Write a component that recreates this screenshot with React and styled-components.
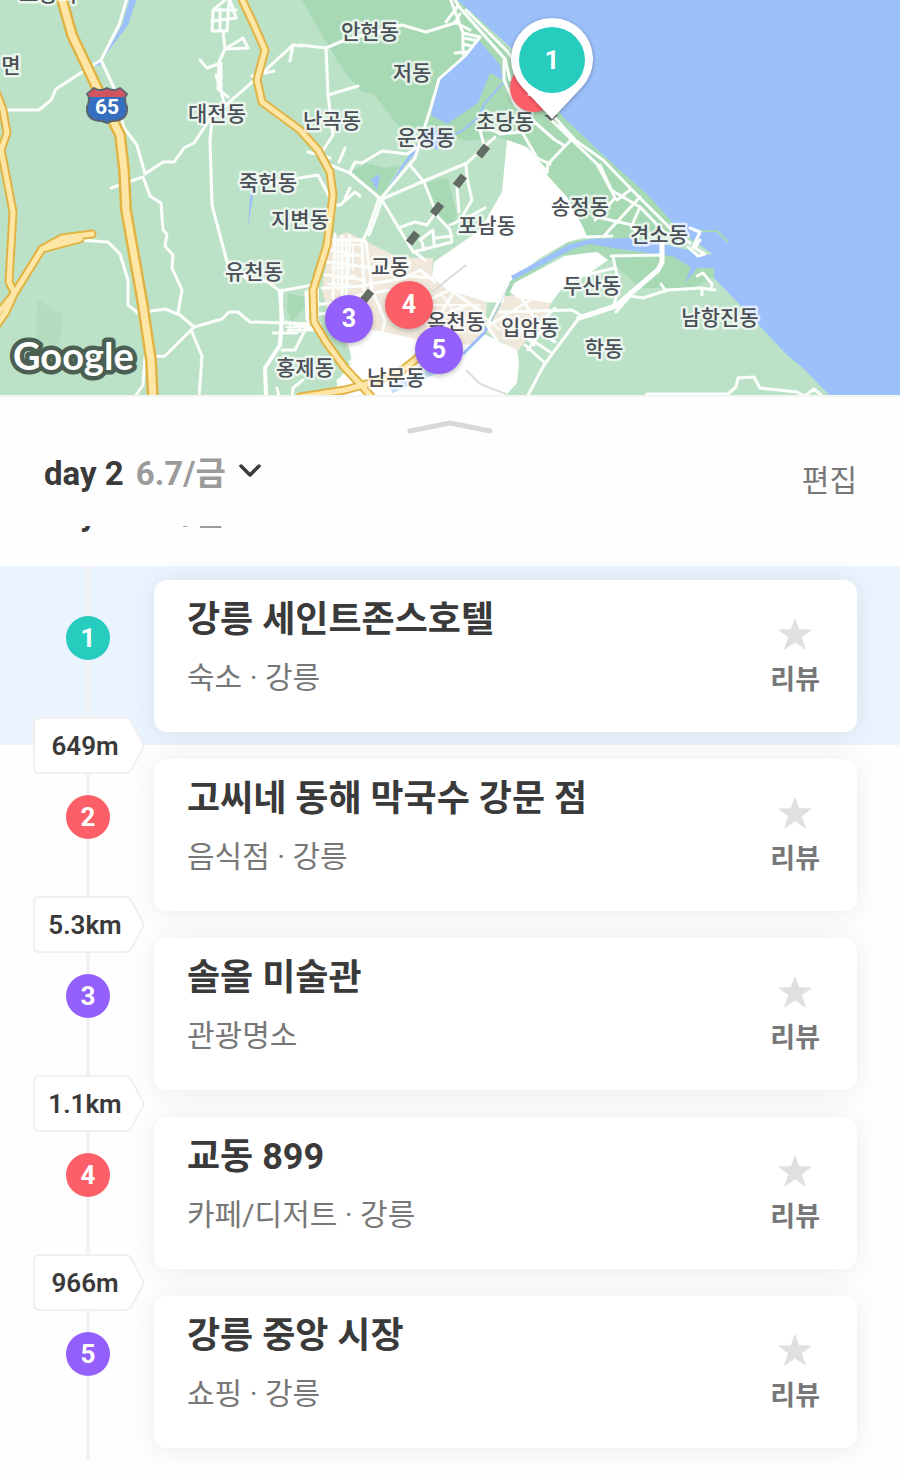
import React, { useState } from 'react'
import styled, { createGlobalStyle } from 'styled-components'

const TEAL = '#26cdbf'
const RED = '#fd5f68'
const PURPLE = '#9360fb'

const places = [
    { id: 1, color: TEAL, name: '강릉 세인트존스호텔', info: '숙소 · 강릉', distance: '649m' },
    { id: 2, color: RED, name: '고씨네 동해 막국수 강문 점', info: '음식점 · 강릉', distance: '5.3km' },
    { id: 3, color: PURPLE, name: '솔올 미술관', info: '관광명소', distance: '1.1km' },
    { id: 4, color: RED, name: '교동 899', info: '카페/디저트 · 강릉', distance: '966m' },
    { id: 5, color: PURPLE, name: '강릉 중앙 시장', info: '쇼핑 · 강릉' },
]

// positions are in map units (900 x 395)
const labels = [
    ['보광리', 48, -6], ['면', 11, 66], ['안현동', 370, 32], ['저동', 412, 73], ['난곡동', 332, 121],
    ['운정동', 426, 138], ['초당동', 505, 122], ['대전동', 217, 114], ['죽헌동', 268, 183],
    ['지변동', 300, 220], ['유천동', 254, 272], ['교동', 390, 267], ['포남동', 487, 226],
    ['송정동', 580, 207], ['견소동', 659, 235], ['두산동', 592, 286], ['옥천동', 456, 322],
    ['입암동', 530, 328], ['학동', 604, 349], ['남항진동', 720, 318], ['홍제동', 305, 368],
    ['남문동', 396, 378],
]

const pins = [
    { id: 2, color: RED, x: 534, y: 88 },
    { id: 4, color: RED, x: 409, y: 305 },
    { id: 3, color: PURPLE, x: 349, y: 319 },
    { id: 5, color: PURPLE, x: 439, y: 350 },
]

const highways = [
    'M61 -4 L72 35 L98 90 L120 135 L124 170 L126 210 L142 300 L151 360 L153 400',
    'M-3 94 L3 110 L7 133 L1 150 L6 175 L13 212 L9 282 L14 292',
    'M-6 318 L14 294 L42 249 L62 238 L92 234 M42 249 L80 239 M14 294 L6 312 L-4 326',
    'M240 -5 L254 25 L265 50 L257 80 L262 102 L300 130 L318 150 L330 172 L333 195 L327 245 L313 290 L314 322 L326 342 L345 368 L362 386 L374 400',
    'M300 397 L345 390 L370 383 L400 372 L420 356 L445 340',
]

const roads = [
    'M127 -2 L119 25 L101 60 L76 76 L56 89 L51 100 L39 110 L4 110',
    'M101 60 L115 90 L124 128 L137 145 L145 174 L163 162 L174 162 L184 148 L194 143 L210 119 L258 77 L293 45 L302 46',
    'M111 188 L143 177 L150 196 L161 203 L163 230 L167 234 L165 246 L173 255 L172 268 L182 290 L178 313',
    'M212 120 L210 140 L212 205 L227 262 L246 278',
    'M225 0 L213 10 L212 31 L227 31 L229 0 M213 10 L236 10 M212 21 L236 18 L230 0 M220 9 L220 31 M223 31 L225 49 L219 62 L218 89 L228 97 M225 49 L243 38 L248 48 L225 49 M200 60 L207 68 L221 63 L221 90',
    'M224 103 L222 95 L216 75 M293 45 L290 61 M252 76 L274 71',
    'M80 240 L108 242 L120 254 L128 280 L128 305 L138 313 L165 309 L180 315 L194 327 L222 319 L229 312 L238 312 L250 322 L320 324',
    'M194 327 L165 356 L145 357 L143 385 L134 398 M192 332 L202 356 L199 398',
    'M282 290 L280 345 L265 368 L266 397 M280 291 L318 284 M282 350 L295 350 L309 322 M273 333 L297 333',
    'M246 278 L268 282 L280 291',
    'M286 322 L318 330 M288 330 L315 330 M306 292 L307 320 M312 300 L314 314',
    'M277 388 L279 397 M292 397 L293 388 L303 380',
    'M300 45 L326 48 L345 40 L402 25 L426 32 L455 23 L460 14',
    'M326 48 L328 95 L333 135 L322 152 M328 95 L358 86',
    'M450 -2 L463 33 L463 54 M446 22 L458 6 M463 33 L480 37 L465 56 L439 79 L431 107 L415 158 L410 164 L382 197',
    'M455 0 L460 8 L505 59 L510 80 M455 22 L470 30 M463 38 L475 40 M463 44 L471 46 M455 53 L467 52',
    'M504 60 L504 80 L515 105 L555 140 L565 146 L573 138 L560 125',
    'M466 10 L508 52 L550 112 L575 140 L603 160 L633 191 L672 230 L690 243',
    'M548 117 L597 164 L611 190 L640 207 L665 233 M565 146 L548 164 L547 172 M550 164 L537 158 L522 132 L500 134 L488 128',
    'M547 172 L528 150 M480 130 L484 145 M495 137 L467 163 L424 181 L382 199 L376 217 L369 235',
    'M308 152 L330 158 M345 148 L339 162 M330 165 L350 173 L382 200 L412 250 L425 260',
    'M350 172 L355 162 L362 163 L382 151 L407 154 L416 148 M268 183 L318 175 L330 198',
    'M332 205 L340 205 L355 192 L360 196 M350 188 L345 198',
    'M410 165 L424 182 L438 217 L450 230 L452 242 L413 252 M466 165 L467 178 L457 188 L459 212 M467 178 L472 200 L463 215',
    'M379 198 L368 230 L362 242 L364 290 M398 228 L415 222 L427 225 L434 215 M420 240 L433 230 L434 244 M435 238 L452 236 M450 225 L472 215 L485 208 M424 250 L422 242',
    'M330 240 L365 240 M330 250 L363 256 M328 262 L388 270 M325 275 L365 280 M322 288 L365 286 M335 234 L333 298 M342 236 L342 295 M350 236 L346 298 M313 305 L340 302 M313 315 L335 312',
    'M366 242 L372 290 L385 320 L382 335 M365 285 L405 278 L420 270 L435 282 M355 296 L390 290 L425 300',
    'M410 262 L400 275 L432 278 M428 300 L450 290 L480 310 M437 320 L452 295 M450 312 L470 304',
    'M508 283 L487 325 L500 345 M490 325 L530 300 M500 312 L572 310 L582 316 M520 296 L545 335 L555 342 M534 345 L520 330 M525 345 L545 363 M532 340 L550 352 M528 350 L545 325',
    'M545 318 L555 308 M613 257 L619 285 L614 305 M585 275 L615 268 M611 256 L662 255',
    'M579 318 L570 330 L544 365 L527 397',
    'M603 237 L640 197 M601 218 L632 225 L638 235 M640 207 L632 225 M617 200 L630 190 M585 237 L612 236 M600 165 L615 198 L595 220',
    'M690 228 L700 232 L693 247 L705 254 L698 256 L688 247 M700 240 L695 248',
    'M616 312 L630 296 L643 298 L668 290 L700 288 L715 290 M661 284 L665 290 M702 288 L702 295 M697 276 L703 273 L712 284 L711 290',
    'M647 394 L728 394 L736 387 L738 378 L754 377 L760 388 L797 392 L806 397 M805 396 L814 389 L822 396',
    'M340 392 L338 380 M360 352 L350 362',
]

const tinyRoads = [
    'M286 327 H318 M290 324 V332 M300 324 V332 M308 290 V326 M318 285 V330',
    'M335 245 H360 M334 256 H356 M332 268 H350 M330 276 H356 M328 284 H350 M338 240 V290 M346 240 V290 M353 244 V270',
    'M440 292 L460 320 M450 288 L500 330 M430 305 L480 305',
]

const Markings = ({ d, color, width }) => (
    <path d={d} stroke={color} strokeWidth={width} fill="none" strokeLinejoin="round" strokeLinecap="round" />
)

const MapDrawing = () => (
    <Canvas viewBox="0 0 900 395" role="img" aria-label="강릉 지도">
        <rect width="900" height="395" fill="#bbe2c7" />

        {/* woods */}
        <g fill="#a8d9b5">
            <path d="M302 0 L320 32 L343 70 L362 92 L374 94 L400 128 L432 135 L470 141 L500 138 L522 145 L548 175 L586 235 L606 241 L640 245 L690 240 L720 256 L600 150 L520 60 L460 0Z" />
            <path d="M350 172 L366 163 L385 168 L400 165 L382 197Z" />
            <path d="M424 183 L448 178 L457 215 L452 228 L438 215Z" />
            <path d="M568 242 L610 236 L690 250 L714 267 L714 276 L695 288 L640 288 L612 262 L597 251 L560 256 L515 284 L504 305 L490 326 L484 324 L508 282Z" />
            <path d="M288 293 L307 298 L306 305 L292 322 L287 310Z" />
        </g>
        <path d="M37 299 L62 313 L60 345 L36 345Z" fill="#b4ddc0" />

        {/* city */}
        <path d="M330 240 L347 232 L367 242 L400 258 L433 258 L432 277 L447 290 L487 302 L484 334 L460 352 L350 350 L330 320 L322 290Z" fill="#f0e8db" />
        <path d="M505 296 L553 297 L548 313 L530 335 L517 352 L487 332Z" fill="#f0e8db" />
        <path d="M507 140 L527 147 L547 175 L567 197 L583 227 L587 237 L568 242 L540 258 L508 283 L503 303 L487 302 L447 290 L432 277 L434 262 L480 230 L502 192Z" fill="#fff" />
        <path d="M597 252 L608 260 L587 275 L563 287 L551 303 L517 298 L510 292 L514 283 L565 256Z" fill="#fff" />
        <path d="M345 328 L380 331 L420 340 L470 345 L484 334 L517 350 L519 362 L517 383 L506 395 L335 395 L338 380 L352 362Z" fill="#fff" />
        <path d="M432 292 L466 265 M466 370 L480 384 L506 394" stroke="#dcdcdc" strokeWidth="2" fill="none" />

        {/* water */}
        <g fill="#9cc0fa">
            <path d="M457 0 L477 17 L510 47 L563 117 L600 152 L650 197 L672 222 L690 238 L714 255 L698 256 L714 267 L698 267 L685 283 L691 267 L672 256 L656 254 L613 248 L590 244 L575 248 L513 280 L511 276 L568 245 L590 239 L630 238 L660 243 L688 250 L697 256 L714 267 L714 278 L740 305 L770 337 L787 355 L803 368 L829 395 L900 395 L900 0Z" />
            <path d="M694 256 L716 254 L716 268 L696 268Z" />
            <path d="M477 38 L500 65 L503 80 L490 73 L478 103 L447 124 L431 115 L438 80 L465 57Z" />
            <path d="M432 125 L441 134 L438 150 L425 142 L405 165 L384 194 L402 165 L420 140Z" />
            <path d="M371 179 L380 174 L377 191Z" />
            <path d="M254 190 L256 178 L250 197 L248 228Z" />
            <path d="M130 -2 L137 -2 L128 25 L103 58 L122 25Z" />
            <path d="M93 66 L101 60 L101 65Z" />
        </g>
        <path d="M503 83 L485 103 L478 118 L462 131 L440 140" stroke="#9cc0fa" strokeWidth="2" fill="none" />
        <path d="M508 284 L498 304 L484 333 L463 354" stroke="#9cc0fa" strokeWidth="3" fill="none" />
        <path d="M391 390 L440 368" stroke="#c3dcf8" strokeWidth="7" fill="none" />
        <path d="M700 231 L717 231 L728 242" stroke="#a8d9b5" strokeWidth="2" fill="none" />

        {roads.map((d) => <Markings key={d} d={d} color="#fcfefc" width={3} />)}
        {tinyRoads.map((d) => <Markings key={d} d={d} color="#fcfcf8" width={2} />)}
        <Markings d="M662 243 L662 262 L658 270 L616 306 L579 318" color="#fff" width={5} />
        <Markings d="M280 291 L282 320 L280 345 L265 368 L266 397" color="#fff" width={4} />
        {highways.map((d, i) => <Markings key={d} d={d} color="#e0b344" width={i ? 9 : 12} />)}
        {highways.map((d, i) => <Markings key={d} d={d} color="#fee7a6" width={i ? 5 : 7} />)}

        {/* route between the stops */}
        <path
            d="M487 146 L479 156 M464 176 L456 186 M441 204 L433 214 M417 233 L409 243 M371 291 L363 301"
            stroke="#626b64"
            strokeWidth="8"
        />
        <path d="M544 115 H558 L551 121Z" fill="#626b64" />

        {/* road shield */}
        <g>
            <path d="M94 88 Q101 92 107 88 Q113 92 120 88 L127 94 Q123 98 127 107 Q128 121 112 121 L107 123 L102 121 Q86 121 87 107 Q91 98 87 94Z" fill="#356fc0" stroke="#5d6470" strokeWidth="2" strokeLinejoin="round" />
            <path d="M94 89 Q101 93 107 89 Q113 93 120 89 L126 94 L124 97 H90 L88 94Z" fill="#d0555f" />
            <ShieldText x="107" y="114">65</ShieldText>
        </g>

        {labels.map(([text, x, y]) => (
            <PlaceLabel key={text} x={x} y={y + 7}>{text}</PlaceLabel>
        ))}
        <Logo x="13" y="370">Google</Logo>
    </Canvas>
)

const DayText = () => (
    <>
        <Day>day 2</Day>
        <Weekday>6.7/금</Weekday>
    </>
)

const Stop = ({ place, selected, onSelect }) => (
    <Row $selected={selected}>
        <Rail>
            <Number $color={place.color}>{place.id}</Number>
            {place.distance && (
                <Distance>
                    <TagShape viewBox="0 0 112 57" aria-hidden="true">
                        <path d="M6 1 H93 Q96 1 98 4 L110 27 Q111 29 110 31 L98 53 Q96 56 93 56 H6 Q1 56 1 51 V6 Q1 1 6 1Z" fill="#fff" stroke="#f0f0f1" strokeWidth="2" />
                    </TagShape>
                    <TagText>{place.distance}</TagText>
                </Distance>
            )}
        </Rail>
        <Card onClick={onSelect}>
            <Texts>
                <Name>{place.name}</Name>
                <Info>{place.info}</Info>
            </Texts>
            <Review type="button">
                <Star viewBox="0 0 34 32" aria-hidden="true">
                    <path d="M17 1 L20.800 11.800 L33 12 L23.300 19.200 L27.300 31 L17 23.800 L6.700 31 L10.700 19.200 L1 12 L13.200 11.800Z" fill="#e0e0e0" stroke="#e0e0e0" strokeLinejoin="round" />
                </Star>
                리뷰
            </Review>
        </Card>
    </Row>
)

const App = () => {
    const [selected, setSelected] = useState(1)
    return (
        <Page>
            <GlobalStyle />
            <MapBox>
                <MapDrawing />
                {pins.map((pin) => (
                    <Pin
                        key={pin.id}
                        type="button"
                        $color={pin.color}
                        $x={pin.x}
                        $y={pin.y}
                        onClick={() => setSelected(pin.id)}
                    >
                        {pin.id}
                    </Pin>
                ))}
                <BigPin type="button" onClick={() => setSelected(1)}>
                    <BigPinShape viewBox="0 0 90 106" aria-hidden="true">
                        <path d="M45 102 L15 70 A41 41 0 1 1 75 70Z" fill="#fff" />
                        <circle cx="45" cy="43" r="33" fill={TEAL} />
                    </BigPinShape>
                    <BigPinText>1</BigPinText>
                </BigPin>
            </MapBox>
            <Sheet>
                <Handle type="button" aria-label="펼치기">
                    <svg width="86" height="16" viewBox="0 0 86 16">
                        <path d="M3 12 L43 4 L83 12" stroke="#d8d8d8" strokeWidth="5" fill="none" strokeLinecap="round" strokeLinejoin="round" />
                    </svg>
                </Handle>
                <Header>
                    <DayButton type="button" aria-haspopup="listbox">
                        <DayText />
                        <Chevron viewBox="0 0 24 16" aria-hidden="true">
                            <path d="M3 3 L12 12 L21 3" stroke="#3b3b3b" strokeWidth="3.500" fill="none" strokeLinecap="round" strokeLinejoin="round" />
                        </Chevron>
                    </DayButton>
                    <Edit type="button">편집</Edit>
                </Header>
                <Scroller>
                    <ListTitle><DayText /></ListTitle>
                    <List>
                        {places.map((place) => (
                            <Stop
                                key={place.id}
                                place={place}
                                selected={place.id === selected}
                                onSelect={() => setSelected(place.id)}
                            />
                        ))}
                    </List>
                </Scroller>
            </Sheet>
        </Page>
    )
}

export default App

const GlobalStyle = createGlobalStyle`
    *{
        box-sizing:border-box;
    }
    body{
        margin:0;
        background:#fefefe;
        color:#3a3a3a;
        font-family:Roboto, "Noto Sans CJK KR", sans-serif;
    }
    button{
        padding:0;
        border:0;
        background:none;
        color:inherit;
        font:inherit;
        cursor:pointer;
    }
`;
const Page = styled.main`
    width:100%;
`;
const MapBox = styled.section`
    position:relative;
    width:100%;
    aspect-ratio:900 / 395;
    overflow:hidden;
`;
const Canvas = styled.svg`
    display:block;
    width:100%;
    height:100%;
`;
const PlaceLabel = styled.text`
    font-family:"Noto Sans CJK KR", sans-serif;
    font-size:21px;
    font-weight:500;
    text-anchor:middle;
    fill:#4b5057;
    stroke:rgba(255, 255, 255, .7);
    stroke-width:5px;
    stroke-linejoin:round;
    paint-order:stroke;
`;
const ShieldText = styled.text`
    font-family:Roboto, sans-serif;
    font-size:21px;
    font-weight:700;
    text-anchor:middle;
    fill:#fff;
`;
const Logo = styled.text`
    font-family:Lato, sans-serif;
    font-size:38px;
    font-weight:700;
    fill:#fff;
    stroke:#4c5f53;
    stroke-width:9px;
    stroke-linejoin:round;
    paint-order:stroke;
`;
const Pin = styled.button`
    position:absolute;
    left:${({ $x }) => ($x / 900) * 100}%;
    top:${({ $y }) => ($y / 395) * 100}%;
    width:48px;
    height:48px;
    margin:-24px 0 0 -24px;
    border-radius:50%;
    background:${({ $color }) => $color};
    box-shadow:0 2px 5px rgba(0, 0, 0, .25);
    color:#fff;
    font-size:25px;
    font-weight:700;
    line-height:48px;
`;
const BigPin = styled.button`
    position:absolute;
    left:${(552 / 900) * 100}%;
    top:${(17 / 395) * 100}%;
    width:90px;
    height:106px;
    margin-left:-45px;
    color:#fff;
`;
const BigPinShape = styled.svg`
    display:block;
    width:100%;
    height:100%;
    filter:drop-shadow(0 1px 2px rgba(0, 0, 0, .3));
`;
const BigPinText = styled.span`
    position:absolute;
    top:28px;
    left:0;
    width:100%;
    font-size:26px;
    font-weight:700;
    line-height:30px;
`;
const Sheet = styled.section`
    padding-top:22px;
    border-top:2px solid #f4f6f5;
    background:#fefefe;
`;
const Handle = styled.button`
    display:block;
    height:16px;
    margin:0 auto;
    svg{
        display:block;
    }
`;
const Header = styled.header`
    display:flex;
    justify-content:space-between;
    align-items:center;
    height:91px;
    padding:0 43px 0 44px;
`;
const DayButton = styled.button`
    display:flex;
    align-items:center;
    height:40px;
    margin-bottom:14px;
    line-height:40px;
`;
const Chevron = styled.svg`
    width:24px;
    height:16px;
    margin-bottom:6px;
`;
const Day = styled.span`
    margin-right:12px;
    font-size:33px;
    font-weight:700;
`;
const Weekday = styled.span`
    margin-right:12px;
    color:#9b9b9b;
    font-size:33px;
    font-weight:700;
`;
const Edit = styled.button`
    color:#777;
    font-size:30px;
    line-height:40px;
`;
const Scroller = styled.div`
    overflow:hidden;
    padding-bottom:16px;
`;
const ListTitle = styled.h2`
    display:flex;
    height:40px;
    margin:-32px 0 32px;
    padding-left:44px;
    line-height:40px;
`;
const List = styled.ol`
    margin:0;
    padding:0;
    list-style:none;
`;
const Row = styled.li`
    display:grid;
    grid-template-columns:154px 1fr;
    padding-right:43px;
    background:${({ $selected }) => ($selected ? '#eaf3fe' : 'transparent')};
`;
const Rail = styled.div`
    display:flex;
    flex-direction:column;
    justify-content:space-between;
    padding:50px 0 0 33px;
    background:linear-gradient(#f2f2f4, #f2f2f4) 86px 0 / 4px 100% no-repeat;
`;
const Number = styled.span`
    width:44px;
    height:44px;
    margin-left:33px;
    border-radius:50%;
    background:${({ $color }) => $color};
    color:#fff;
    font-size:26px;
    font-weight:700;
    line-height:44px;
    text-align:center;
`;
const Distance = styled.div`
    position:relative;
    z-index:1;
    width:112px;
    height:57px;
    margin-bottom:-29px;
`;
const TagShape = styled.svg`
    display:block;
    width:100%;
    height:100%;
`;
const TagText = styled.span`
    position:absolute;
    inset:0 8px 0 0;
    font-size:26px;
    font-weight:600;
    line-height:58px;
    text-align:center;
`;
const Card = styled.article`
    display:flex;
    justify-content:space-between;
    height:152px;
    margin:14px 0 13px;
    padding:0 37px 0 33px;
    border-radius:13px;
    background:#fff;
    box-shadow:0 2px 28px rgba(0, 0, 0, .08);
`;
const Texts = styled.div`
    padding-top:16px;
`;
const Name = styled.h3`
    margin:0 0 14px;
    font-size:36px;
    font-weight:700;
    line-height:48px;
`;
const Info = styled.p`
    margin:0;
    color:#777;
    font-size:30px;
    line-height:40px;
`;
const Review = styled.button`
    display:flex;
    flex-direction:column;
    align-items:center;
    align-self:flex-start;
    padding-top:38px;
    color:#777;
    font-size:27px;
    font-weight:700;
    line-height:36px;
`;
const Star = styled.svg`
    width:34px;
    height:32px;
    margin-bottom:12px;
`;
